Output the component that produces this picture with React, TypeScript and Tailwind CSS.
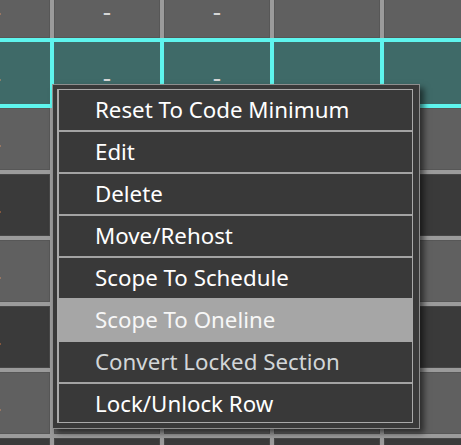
import React from "react";

const COLS = 5;
type RowKind = "gray" | "dark" | "sel";
const rows: { kind: RowKind; dashes: boolean[] }[] = [
  { kind: "gray", dashes: [true, true, true, false, false] },
  { kind: "sel", dashes: [true, true, true, false, false] },
  { kind: "gray", dashes: [true, false, false, false, false] },
  { kind: "dark", dashes: [true, false, false, false, false] },
  { kind: "gray", dashes: [true, false, false, false, false] },
  { kind: "dark", dashes: [true, false, false, false, false] },
  { kind: "gray", dashes: [true, false, false, false, false] },
  { kind: "dark", dashes: [true, false, false, false, false] },
];

const cellClass: Record<RowKind, string> = {
  gray: "bg-[#606060] border border-[#575757]",
  dark: "bg-[#3a3a3a] border border-[#474747]",
  sel: "bg-[#3f6a68]",
};

function Cell({ kind, dash }: { kind: RowKind; dash: boolean }) {
  return (
    <div className={`w-[106px] h-[62px] shrink-0 flex items-center justify-center ${cellClass[kind]}`}>
      {dash && (
        <span className="translate-y-[4px] text-[26px] leading-[12px] text-[#d6d6d6] font-['Noto_Sans',sans-serif]">-</span>
      )}
    </div>
  );
}

const items: { label: string; state?: "hl" | "dim" }[] = [
  { label: "Reset To Code Minimum" },
  { label: "Edit" },
  { label: "Delete" },
  { label: "Move/Rehost" },
  { label: "Scope To Schedule" },
  { label: "Scope To Oneline", state: "hl" },
  { label: "Convert Locked Section", state: "dim" },
  { label: "Lock/Unlock Row" },
];

export default function App() {
  return (
    <div className="relative w-[461px] h-[445px] overflow-hidden bg-[#9b9b9b] font-['Noto_Sans',sans-serif]">
      <div className="mt-[-24px] ml-[-56px] flex flex-col gap-[4px]">
        {rows.map((r, i) =>
          r.kind === "sel" ? (
            <div key={i} className="bg-[#5ef5ee] -my-[4px] py-[4px] flex gap-[4px]">
              {Array.from({ length: COLS }).map((_, c) => (
                <Cell key={c} kind="sel" dash={r.dashes[c]} />
              ))}
            </div>
          ) : (
            <div key={i} className="flex gap-[4px]">
              {Array.from({ length: COLS }).map((_, c) => (
                <Cell key={c} kind={r.kind} dash={r.dashes[c]} />
              ))}
            </div>
          )
        )}
      </div>

      <div className="absolute left-[52px] top-[84px] w-[368px] h-[345px] bg-[#393939] border border-[#8e8e8e] pl-[4px] pt-[4px] pr-[6px] pb-[5px] shadow-[4px_4px_6px_rgba(0,0,0,0.55)]">
        <div className="h-full border-[#a9a9a9] border-l-2 border-t border-r border-b flex flex-col">
          {items.map((it, i) => {
            const prevHl = i > 0 && items[i - 1].state === "hl";
            const border =
              i === 0
                ? ""
                : it.state === "hl" || prevHl
                ? "border-t-2 border-[#a6a6a6]"
                : "border-t-2 border-[#a3a3a3]";
            const bg = it.state === "hl" ? "bg-[#a6a6a6]" : "";
            const color =
              it.state === "hl"
                ? "text-[#f7f7f7]"
                : it.state === "dim"
                ? "text-[#d2d6d8]"
                : "text-[#ffffff]";
            return (
              <div
                key={i}
                className={`h-[40px] box-content flex items-center pl-[36px] text-[22.3px] leading-[40px] whitespace-nowrap ${border} ${bg} ${color}`}
              >
                {it.label}
              </div>
            );
          })}
        </div>
      </div>
    </div>
  );
}
